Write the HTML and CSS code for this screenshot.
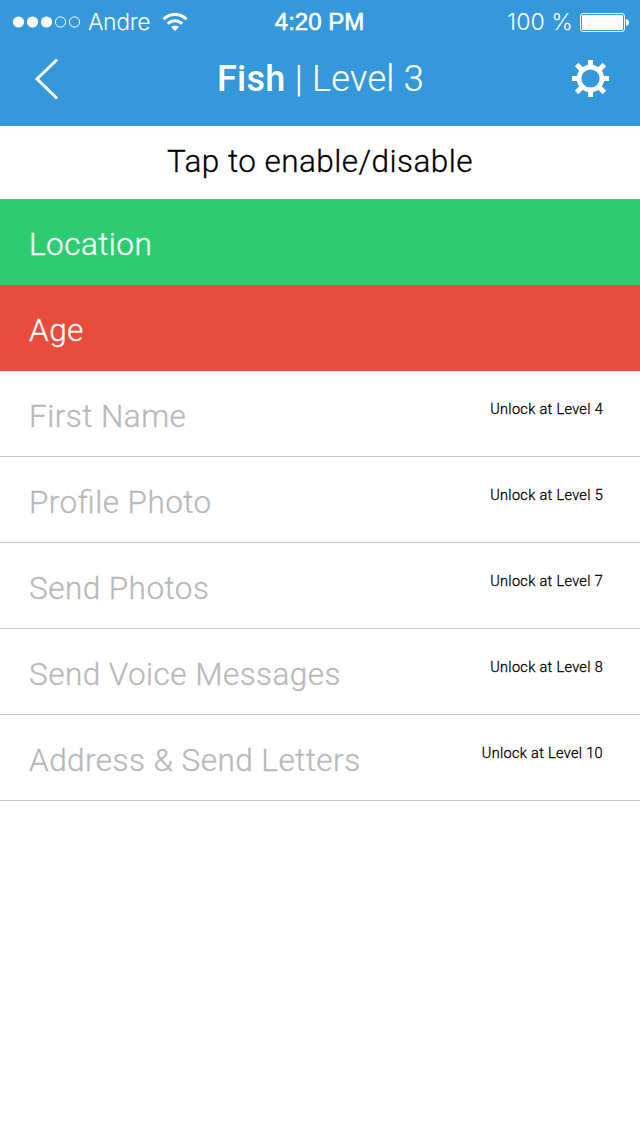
FILE: index.html
```
<!DOCTYPE html>
<html lang="en">
<head>
<meta charset="utf-8">
<title>Fish | Level 3</title>
<link rel="stylesheet" href="styles.css">
</head>
<body>
<header class="header">
  <div class="status">
    <div class="carrier">
      <svg class="signal" width="68" height="12" viewBox="0 0 68 12"><g fill="#fff"><circle cx="6.500" cy="6" r="5.600"/><circle cx="20.500" cy="6" r="5.600"/><circle cx="34.500" cy="6" r="5.600"/></g><g fill="none" stroke="#fff"><circle cx="48.500" cy="6" r="5.100"/><circle cx="62.500" cy="6" r="5.100"/></g></svg>
      <span class="carrier-name">Andre</span>
      <svg class="wifi" width="26" height="19" viewBox="0 0 26 19"><path d="M13 18 L9 14 A5.800 5.800 0 0 1 17 14 Z" fill="#fff"/><g fill="none" stroke="#fff" stroke-width="3"><path d="M5.800 10.800 A10.200 10.200 0 0 1 20.200 10.800"/><path d="M1.500 6.200 A16.300 16.300 0 0 1 24.500 6.200"/></g></svg>
    </div>
    <span class="time">4:20 PM</span>
    <div class="power">
      <span class="percent">100 %</span>
      <svg class="battery" width="49" height="19" viewBox="0 0 49 19"><rect x=".5" y=".5" width="44" height="18" rx="2.500" fill="none" stroke="#fff"/><rect x="2" y="2" width="41" height="15" rx="1" fill="#fff"/><path d="M46 6 Q49 6.500 49 9.500 Q49 12.500 46 13 Z" fill="#fff"/></svg>
    </div>
  </div>
  <nav class="nav">
    <svg class="back" width="26" height="42" viewBox="0 0 26 42"><path d="M23.200 1.500 L3 21 L23.200 40.500" fill="none" stroke="#fff" stroke-width="3"/></svg>
    <h1 class="title"><b>Fish</b> | Level 3</h1>
    <svg class="gear" width="37" height="37" viewBox="-18.500 -18.500 37 37"><circle r="11.400" fill="none" stroke="#fff" stroke-width="4.600"/><g stroke="#fff" stroke-width="5"><path d="M0 -18.500V-12M0 18.500V12M-18.500 0H-12M18.500 0H12M-13.900 -13.900L-8.500 -8.500M13.900 13.900L8.500 8.500M-13.900 13.900L-8.500 8.500M13.900 -13.900L8.500 -8.500"/></g></svg>
  </nav>
</header>
<p class="hint">Tap to enable/disable</p>
<ul class="list">
  <li class="row on"><span class="name">Location</span></li>
  <li class="row off"><span class="name">Age</span></li>
  <li class="row locked"><span class="name">First Name</span><span class="unlock">Unlock at Level 4</span></li>
  <li class="row locked"><span class="name">Profile Photo</span><span class="unlock">Unlock at Level 5</span></li>
  <li class="row locked"><span class="name">Send Photos</span><span class="unlock">Unlock at Level 7</span></li>
  <li class="row locked"><span class="name">Send Voice Messages</span><span class="unlock">Unlock at Level 8</span></li>
  <li class="row locked"><span class="name">Address &amp; Send Letters</span><span class="unlock">Unlock at Level 10</span></li>
</ul>
</body>
</html>
```
FILE: styles.css
```
* { box-sizing: border-box; margin: 0; padding: 0; }
body { background: #fff; font-family: Roboto, sans-serif; color: #000; }
svg { display: block; flex: none; }
.header { height: 126px; background: #3498db; color: #fff; }
.status { height: 43px; padding: 0 11px 0 12px; display: grid; grid-template-columns: 1fr auto 1fr; align-items: center; font-family: Inter, sans-serif; font-size: 23px; line-height: 43px; white-space: nowrap; }
.carrier { display: flex; align-items: center; }
.carrier-name { margin-left: 8px; font-weight: 300; letter-spacing: -.4px; padding-top: 1px; }
.wifi { margin-left: 12px; }
.time { font-family: "Liberation Sans", Arial, sans-serif; font-size: 24px; line-height: 42px; margin-right: 2px; -webkit-text-stroke: .6px #fff; }
.power { display: flex; align-items: center; justify-content: flex-end; font-weight: 300; }
.percent { padding-top: 1px; letter-spacing: .1px; }
.battery { margin-left: 7px; }
.nav { height: 71px; padding: 0 31px 0 34px; display: grid; grid-template-columns: 1fr auto 1fr; align-items: center; }
.title { margin-right: 2px; font-size: 36px; font-weight: 300; letter-spacing: .3px; white-space: nowrap; -webkit-text-stroke: .2px #fff; }
.title b { font-weight: 500; -webkit-text-stroke: 0; }
.gear { justify-self: end; }
.hint { height: 73px; line-height: 71px; text-align: center; font-size: 31.5px; font-weight: 300; letter-spacing: .46px; -webkit-text-stroke: .3px; }
.list { list-style: none; }
.row { height: 86px; padding: 0 37px 0 29px; display: flex; justify-content: space-between; }
.name { font-size: 31.5px; font-weight: 300; line-height: 91px; letter-spacing: .46px; font-feature-settings: "liga" 1; -webkit-text-stroke: .3px; }
.on { background: #2ecc71; color: #fff; }
.off { background: #e74c3c; color: #fff; }
.locked { border-bottom: 1px solid #c8c8c8; }
.locked .name { color: #b8b8b8; }
.unlock { font-size: 14.5px; font-weight: 300; line-height: 77px; letter-spacing: .33px; -webkit-text-stroke: .3px; }
```
